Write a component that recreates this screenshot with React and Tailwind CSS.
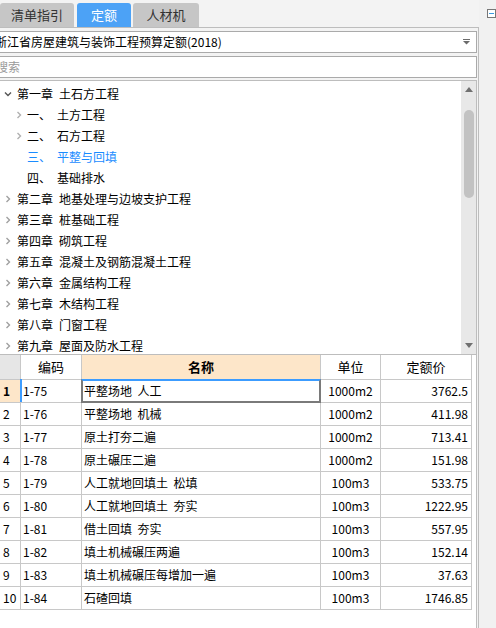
import React from 'react';

const tree = [
    { level: 0, open: true, a: '第一章', b: '土石方工程' },
    { level: 1, arrow: true, a: '一、', b: '土方工程' },
    { level: 1, arrow: true, a: '二、', b: '石方工程' },
    { level: 1, arrow: false, a: '三、', b: '平整与回填', active: true },
    { level: 1, arrow: false, a: '四、', b: '基础排水' },
    { level: 0, a: '第二章', b: '地基处理与边坡支护工程' },
    { level: 0, a: '第三章', b: '桩基础工程' },
    { level: 0, a: '第四章', b: '砌筑工程' },
    { level: 0, a: '第五章', b: '混凝土及钢筋混凝土工程' },
    { level: 0, a: '第六章', b: '金属结构工程' },
    { level: 0, a: '第七章', b: '木结构工程' },
    { level: 0, a: '第八章', b: '门窗工程' },
    { level: 0, a: '第九章', b: '屋面及防水工程' },
];

const rows = [
    ['1-75', '平整场地  人工', '1000m2', '3762.5'],
    ['1-76', '平整场地  机械', '1000m2', '411.98'],
    ['1-77', '原土打夯二遍', '1000m2', '713.41'],
    ['1-78', '原土碾压二遍', '1000m2', '151.98'],
    ['1-79', '人工就地回填土  松填', '100m3', '533.75'],
    ['1-80', '人工就地回填土  夯实', '100m3', '1222.95'],
    ['1-81', '借土回填  夯实', '100m3', '557.95'],
    ['1-82', '填土机械碾压两遍', '100m3', '152.14'],
    ['1-83', '填土机械碾压每增加一遍', '100m3', '37.63'],
    ['1-84', '石碴回填', '100m3', '1746.85'],
];

const Chevron = ({ down, color }) => (
    <svg width="8" height="8" viewBox="0 0 8 8" className="shrink-0">
        {down ? (
            <path d="M1 2.5 L4 5.5 L7 2.5" fill="none" stroke={color} strokeWidth="1.4" />
        ) : (
            <path d="M2.5 1 L5.5 4 L2.5 7" fill="none" stroke={color} strokeWidth="1.4" />
        )}
    </svg>
);

const App = () => {
    return (
        <div className="w-[496px] h-[628px] bg-[#f3f3f3] flex overflow-hidden text-[12px] text-black font-['Noto_Sans_CJK_SC',sans-serif]">
            <div className="w-[479px] flex flex-col">
                {/* Tabs */}
                <div className="h-[27px] pt-[3px] flex items-stretch">
                    <div className="w-[74px] bg-[#c6c6c6] rounded-t-[3px] flex items-center justify-center text-[13px] text-[#333]">清单指引</div>
                    <div className="w-[54px] ml-[3px] bg-[#4ca2f6] rounded-t-[3px] flex items-center justify-center text-[13px] text-white">定额</div>
                    <div className="w-[66px] ml-[2px] bg-[#c6c6c6] rounded-t-[3px] flex items-center justify-center text-[13px] text-[#333]">人材机</div>
                </div>

                <div className="flex-1 flex flex-col border-t border-r border-[#bdbdbd] min-h-0">
                    {/* Dropdown */}
                    <div className="mt-[3px] -ml-[8px] w-[485px] h-[22px] bg-white border border-[#aaaaaa] flex items-center pl-[2px] pr-[6px]">
                        <span className="flex-1 whitespace-nowrap leading-none">浙江省房屋建筑与装饰工程预算定额(2018)</span>
                        <svg width="7" height="6" viewBox="0 0 7 6">
                            <rect x="0" y="0" width="7" height="1" fill="#6b6b6b" />
                            <path d="M0 2 L7 2 L3.5 5.5 Z" fill="#6b6b6b" />
                        </svg>
                    </div>
                    {/* Search */}
                    <div className="mt-[3px] -ml-[8px] w-[485px] h-[22px] bg-white border border-[#aaaaaa] flex items-center pl-[3px]">
                        <span className="text-[#9a9a9a] leading-none">搜索</span>
                    </div>

                    {/* Tree */}
                    <div className="mt-[2px] w-[477px] h-[275px] bg-white border-y border-r border-[#bdbdbd] flex">
                        <div className="flex-1 overflow-hidden pt-[2px]">
                            {tree.map((t, i) => (
                                <div key={i} className="h-[21px] flex items-center whitespace-nowrap">
                                    {t.level === 0 ? (
                                        <div className="w-[17px] pl-[4px] flex items-center">
                                            <Chevron down={t.open} color={t.open ? '#555' : '#a0a0a0'} />
                                        </div>
                                    ) : (
                                        <div className="w-[27px] pl-[15px] flex items-center">
                                            {t.arrow && <Chevron color="#b0b0b0" />}
                                        </div>
                                    )}
                                    <span className={t.active ? 'text-[#1a8cff]' : ''}>{t.a}</span>
                                    <span className={`ml-[6px] ${t.active ? 'text-[#1a8cff]' : ''}`}>{t.b}</span>
                                </div>
                            ))}
                        </div>
                        {/* Scrollbar */}
                        <div className="w-[15px] bg-[#e8e8e8] flex flex-col items-center py-[6px]">
                            <svg width="8" height="5" viewBox="0 0 8 5"><path d="M0 5 L4 0 L8 5 Z" fill="#707070" /></svg>
                            <div className="w-[10px] h-[88px] mt-[18px] rounded-full bg-[#c2c2c2]"></div>
                            <div className="flex-1"></div>
                            <svg width="8" height="5" viewBox="0 0 8 5"><path d="M0 0 L8 0 L4 5 Z" fill="#707070" /></svg>
                        </div>
                    </div>

                    {/* Table */}
                    <div className="w-[477px] flex-1 bg-white border-r border-[#bdbdbd]">
                        <div className="flex h-[25px] text-[13px]">
                            <div className="w-[21px] bg-[#e6e6e6] border-r border-b border-[#c8c8c8]"></div>
                            <div className="w-[61px] border-r border-b border-[#c8c8c8] flex items-center justify-center">编码</div>
                            <div className="w-[239px] bg-[#fde6c9] border-r border-b border-[#c8c8c8] flex items-center justify-center font-bold">名称</div>
                            <div className="w-[60px] border-r border-b border-[#c8c8c8] flex items-center justify-center">单位</div>
                            <div className="w-[91px] border-r border-b border-[#c8c8c8] flex items-center justify-center">定额价</div>
                        </div>
                        {rows.map((r, i) => {
                            const sel = i === 0;
                            return (
                                <div key={i} className="flex h-[23px]">
                                    <div className={`w-[21px] border-r border-b border-[#c8c8c8] flex items-center pl-[3px] ${sel ? 'bg-[#fde6c9] font-bold' : ''}`}>{i + 1}</div>
                                    <div className="relative w-[61px] border-r border-b border-[#c8c8c8] flex items-center pl-[2px]">
                                        {sel && <div className="absolute -left-[1px] -top-[1px] bottom-0 w-[2px] bg-[#3c9cff]"></div>}
                                        {r[0]}
                                    </div>
                                    <div className="relative w-[239px] border-r border-b border-[#c8c8c8] flex items-center pl-[2px] whitespace-pre">
                                        {sel && <div className="absolute -left-[1px] -right-[1px] -top-[1px] -bottom-[1px] border-2 border-[#7a7a7a] border-t-[#3c9cff]"></div>}
                                        {r[1]}
                                    </div>
                                    <div className="w-[60px] border-r border-b border-[#c8c8c8] flex items-center justify-center">{r[2]}</div>
                                    <div className="w-[91px] border-r border-b border-[#c8c8c8] flex items-center justify-end pr-[3px]">{r[3]}</div>
                                </div>
                            );
                        })}
                    </div>
                </div>
            </div>

            {/* Right strip */}
            <div className="flex-1 bg-[#f1f1f1] pt-[9px] pl-[8px]">
                <div className="w-[9px] h-[9px] border border-[#777] bg-white flex items-center justify-center">
                    <div className="w-[5px] h-[1px] bg-[#3b9ae1]"></div>
                </div>
            </div>
        </div>
    );
};

export default App;
